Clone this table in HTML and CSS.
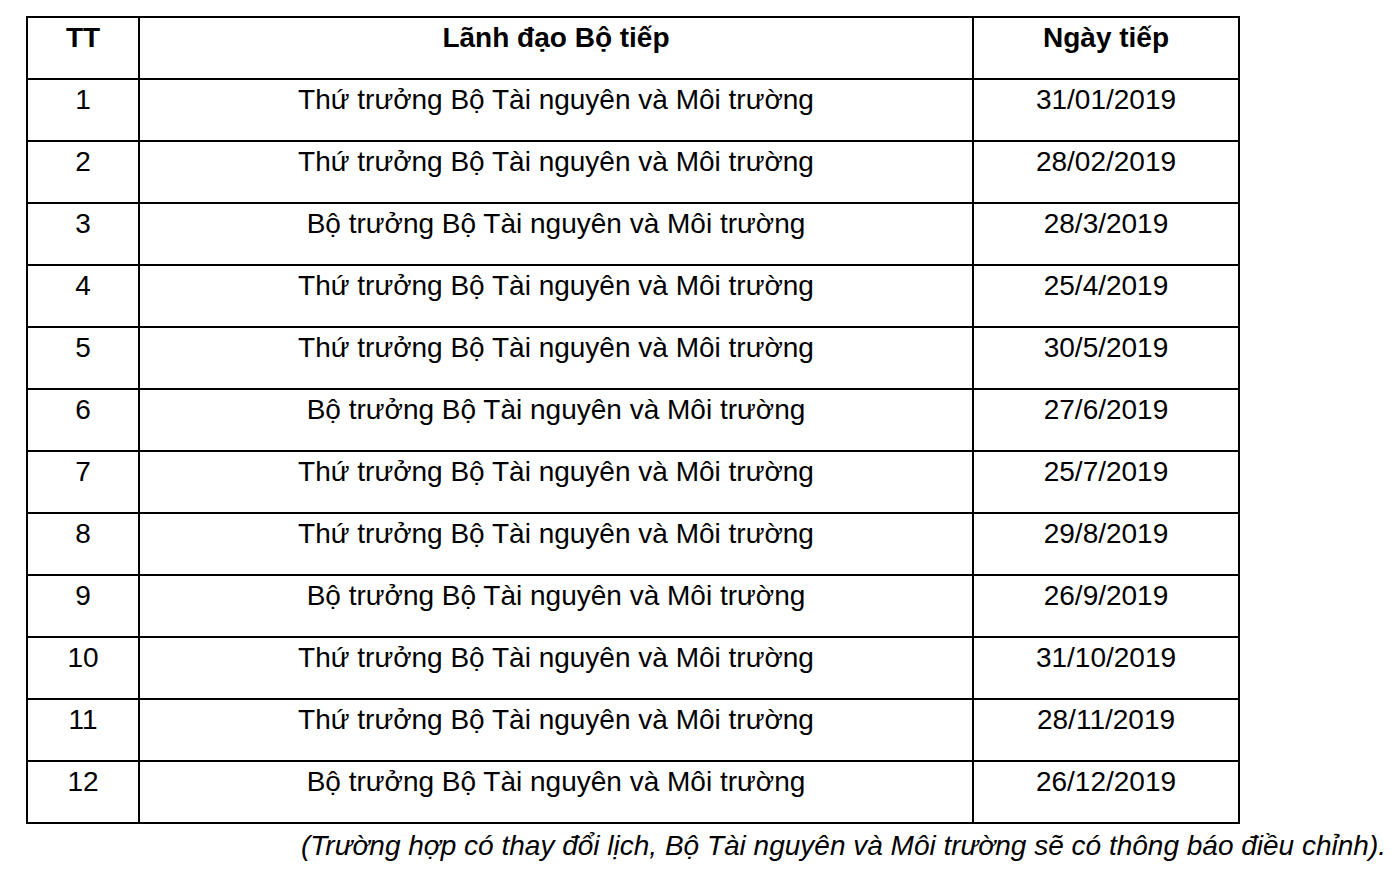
FILE: index.html
```html
<!DOCTYPE html>
<html lang="vi">
<head>
<meta charset="utf-8">
<title>Lịch tiếp công dân</title>
<link rel="stylesheet" href="styles.css">
</head>
<body>
<div class="page">
  <div class="schedule">
    <div class="cell head">TT</div>
    <div class="cell head">Lãnh đạo Bộ tiếp</div>
    <div class="cell head">Ngày tiếp</div>

    <div class="cell">1</div><div class="cell">Thứ trưởng Bộ Tài nguyên và Môi trường</div><div class="cell">31/01/2019</div>
    <div class="cell">2</div><div class="cell">Thứ trưởng Bộ Tài nguyên và Môi trường</div><div class="cell">28/02/2019</div>
    <div class="cell">3</div><div class="cell">Bộ trưởng Bộ Tài nguyên và Môi trường</div><div class="cell">28/3/2019</div>
    <div class="cell">4</div><div class="cell">Thứ trưởng Bộ Tài nguyên và Môi trường</div><div class="cell">25/4/2019</div>
    <div class="cell">5</div><div class="cell">Thứ trưởng Bộ Tài nguyên và Môi trường</div><div class="cell">30/5/2019</div>
    <div class="cell">6</div><div class="cell">Bộ trưởng Bộ Tài nguyên và Môi trường</div><div class="cell">27/6/2019</div>
    <div class="cell">7</div><div class="cell">Thứ trưởng Bộ Tài nguyên và Môi trường</div><div class="cell">25/7/2019</div>
    <div class="cell">8</div><div class="cell">Thứ trưởng Bộ Tài nguyên và Môi trường</div><div class="cell">29/8/2019</div>
    <div class="cell">9</div><div class="cell">Bộ trưởng Bộ Tài nguyên và Môi trường</div><div class="cell">26/9/2019</div>
    <div class="cell">10</div><div class="cell">Thứ trưởng Bộ Tài nguyên và Môi trường</div><div class="cell">31/10/2019</div>
    <div class="cell">11</div><div class="cell">Thứ trưởng Bộ Tài nguyên và Môi trường</div><div class="cell">28/11/2019</div>
    <div class="cell">12</div><div class="cell">Bộ trưởng Bộ Tài nguyên và Môi trường</div><div class="cell">26/12/2019</div>
  </div>
  <p class="note">(Trường hợp có thay đổi lịch, Bộ Tài nguyên và Môi trường sẽ có thông báo điều chỉnh).</p>
</div>
</body>
</html>
```

FILE: styles.css
```css
html, body {
  margin: 0;
  padding: 0;
  background: #fff;
}

body {
  font-family: "Liberation Sans", Arial, Helvetica, sans-serif;
  font-size: 28px;
  color: #000;
}

.page {
  padding: 16px 12px 0 26px;
}

.schedule {
  display: grid;
  grid-template-columns: 110px 832px 264px;
  grid-auto-rows: 60px;
  gap: 2px;
  padding: 2px;
  width: 1210px;
  background: #000;
}

.cell {
  background: #fff;
  text-align: center;
  padding-top: 4px;
  box-sizing: border-box;
  line-height: 31px;
}

.head {
  font-weight: bold;
}

.note {
  margin: 6px 0 0;
  text-align: right;
  font-style: italic;
  line-height: 31px;
}
```
